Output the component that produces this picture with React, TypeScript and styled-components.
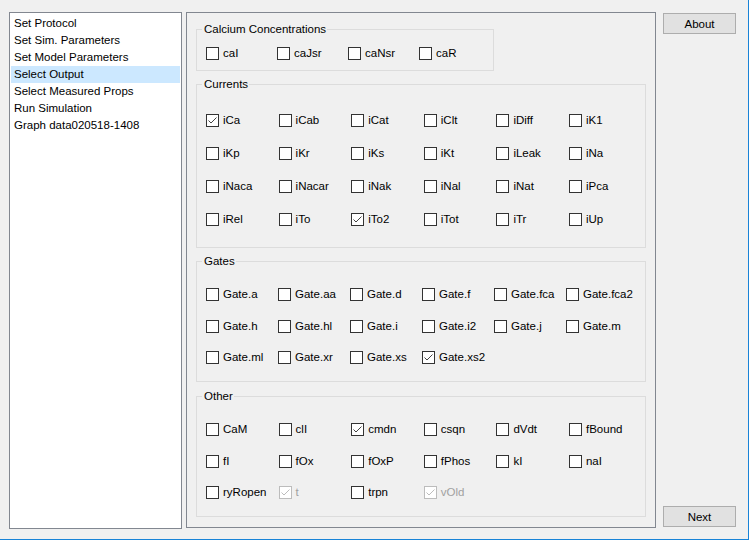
import styled, { createGlobalStyle } from "styled-components";

const GlobalStyle = createGlobalStyle`
  html, body {
    margin: 0;
    padding: 0;
    background: #f0f0f0;
  }
  body {
    font-family: "Liberation Sans", Arial, sans-serif;
    font-size: 11.5px;
    color: #000;
  }
`;

const Window = styled.div`
  width: 749px;
  height: 540px;
  box-sizing: border-box;
  border-right: 1px solid #1883d7;
  border-bottom: 1px solid #1883d7;
  background: #f0f0f0;
  padding: 12px 0 0 9px;
  display: flex;
  align-items: flex-start;
`;

const Sidebar = styled.ul`
  list-style: none;
  margin: 0;
  padding: 2px 1px;
  width: 173px;
  height: 517px;
  box-sizing: border-box;
  background: #fff;
  border: 1px solid #828790;
`;

const SidebarItem = styled.li<{ $selected?: boolean }>`
  height: 17px;
  line-height: 16px;
  padding-left: 3px;
  white-space: nowrap;
  background: ${({ $selected }) => ($selected ? "#cce8ff" : "transparent")};
`;

const MainFrame = styled.div`
  margin-left: 4px;
  width: 470px;
  height: 516px;
  box-sizing: border-box;
  border: 1px solid #828790;
  padding: 9px 9px;
  display: flex;
  flex-direction: column;
  align-items: flex-start;
`;

const Group = styled.fieldset<{ $width?: number; $pt: number; $pb: number; $gap: number }>`
  margin: 0 0 ${({ $gap }) => $gap}px 0;
  min-width: 0;
  box-sizing: border-box;
  width: ${({ $width }) => ($width ? `${$width}px` : "100%")};
  border: 1px solid #dcdcdc;
  padding: ${({ $pt }) => $pt}px 0 ${({ $pb }) => $pb}px 9px;
`;

const Legend = styled.legend`
  margin-left: -4px;
  padding: 0 1px 0 2px;
  line-height: 15px;
`;

const CheckGrid = styled.div<{ $col: number; $row: number; $cols: number }>`
  display: grid;
  grid-template-columns: repeat(${({ $cols }) => $cols}, ${({ $col }) => $col}px);
  grid-auto-rows: ${({ $row }) => $row}px;
  align-items: center;
`;

const CheckItem = styled.label<{ $disabled?: boolean }>`
  display: flex;
  align-items: center;
  gap: 4px;
  line-height: 15px;
  white-space: nowrap;
  color: ${({ $disabled }) => ($disabled ? "#a0a0a0" : "#000")};
`;

const Box = styled.span<{ $disabled?: boolean }>`
  width: 13px;
  height: 13px;
  box-sizing: border-box;
  flex: none;
  background: #fff;
  border: 1px solid ${({ $disabled }) => ($disabled ? "#bcbcbc" : "#333")};
  display: flex;
  align-items: center;
  justify-content: center;
`;

const SideColumn = styled.div`
  margin-left: 7px;
  height: 516px;
  display: flex;
  flex-direction: column;
  justify-content: space-between;
  padding: 1px 0 1px;
  box-sizing: border-box;
`;

const Button = styled.button`
  width: 73px;
  height: 21px;
  box-sizing: border-box;
  background: #e1e1e1;
  border: 1px solid #adadad;
  font-family: "Liberation Sans", Arial, sans-serif;
  font-size: 11.5px;
  color: #000;
  padding: 0;
`;

type Item = { name: string; checked?: boolean; disabled?: boolean };

const CheckBox = ({ name, checked, disabled }: Item) => (
  <CheckItem $disabled={disabled}>
    <Box $disabled={disabled}>
      {checked && (
        <svg width="11" height="11" viewBox="0 0 11 11">
          <polyline
            points="1.5,5.5 4,8 9.5,2.5"
            fill="none"
            stroke={disabled ? "#bcbcbc" : "#444"}
            strokeWidth="1"
          />
        </svg>
      )}
    </Box>
    {name}
  </CheckItem>
);

const pages = [
  "Set Protocol",
  "Set Sim. Parameters",
  "Set Model Parameters",
  "Select Output",
  "Select Measured Props",
  "Run Simulation",
  "Graph data020518-1408",
];

const calcium: Item[] = [{ name: "caI" }, { name: "caJsr" }, { name: "caNsr" }, { name: "caR" }];

const currents: Item[] = [
  { name: "iCa", checked: true }, { name: "iCab" }, { name: "iCat" }, { name: "iClt" }, { name: "iDiff" }, { name: "iK1" },
  { name: "iKp" }, { name: "iKr" }, { name: "iKs" }, { name: "iKt" }, { name: "iLeak" }, { name: "iNa" },
  { name: "iNaca" }, { name: "iNacar" }, { name: "iNak" }, { name: "iNal" }, { name: "iNat" }, { name: "iPca" },
  { name: "iRel" }, { name: "iTo" }, { name: "iTo2", checked: true }, { name: "iTot" }, { name: "iTr" }, { name: "iUp" },
];

const gates: Item[] = [
  { name: "Gate.a" }, { name: "Gate.aa" }, { name: "Gate.d" }, { name: "Gate.f" }, { name: "Gate.fca" }, { name: "Gate.fca2" },
  { name: "Gate.h" }, { name: "Gate.hl" }, { name: "Gate.i" }, { name: "Gate.i2" }, { name: "Gate.j" }, { name: "Gate.m" },
  { name: "Gate.ml" }, { name: "Gate.xr" }, { name: "Gate.xs" }, { name: "Gate.xs2", checked: true },
];

const other: Item[] = [
  { name: "CaM" }, { name: "clI" }, { name: "cmdn", checked: true }, { name: "csqn" }, { name: "dVdt" }, { name: "fBound" },
  { name: "fI" }, { name: "fOx" }, { name: "fOxP" }, { name: "fPhos" }, { name: "kI" }, { name: "naI" },
  { name: "ryRopen" }, { name: "t", checked: true, disabled: true }, { name: "trpn" }, { name: "vOld", checked: true, disabled: true },
];

const App = () => (
  <>
    <GlobalStyle />
    <Window>
      <Sidebar>
        {pages.map((p) => (
          <SidebarItem key={p} $selected={p === "Select Output"}>
            {p}
          </SidebarItem>
        ))}
      </Sidebar>
      <MainFrame>
        <Group $width={298} $pt={9} $pb={9} $gap={6}>
          <Legend>Calcium Concentrations</Legend>
          <CheckGrid $cols={4} $col={71} $row={15}>
            {calcium.map((c) => (
              <CheckBox key={c.name} {...c} />
            ))}
          </CheckGrid>
        </Group>
        <Group $pt={12} $pb={11} $gap={6}>
          <Legend>Currents</Legend>
          <CheckGrid $cols={6} $col={72.6} $row={33}>
            {currents.map((c) => (
              <CheckBox key={c.name} {...c} />
            ))}
          </CheckGrid>
        </Group>
        <Group $pt={10} $pb={7.5} $gap={7}>
          <Legend>Gates</Legend>
          <CheckGrid $cols={6} $col={72} $row={31.5}>
            {gates.map((c) => (
              <CheckBox key={c.name} {...c} />
            ))}
          </CheckGrid>
        </Group>
        <Group $pt={10} $pb={7.5} $gap={0}>
          <Legend>Other</Legend>
          <CheckGrid $cols={6} $col={72.6} $row={31.5}>
            {other.map((c) => (
              <CheckBox key={c.name} {...c} />
            ))}
          </CheckGrid>
        </Group>
      </MainFrame>
      <SideColumn>
        <Button>About</Button>
        <Button>Next</Button>
      </SideColumn>
    </Window>
  </>
);

export default App;
